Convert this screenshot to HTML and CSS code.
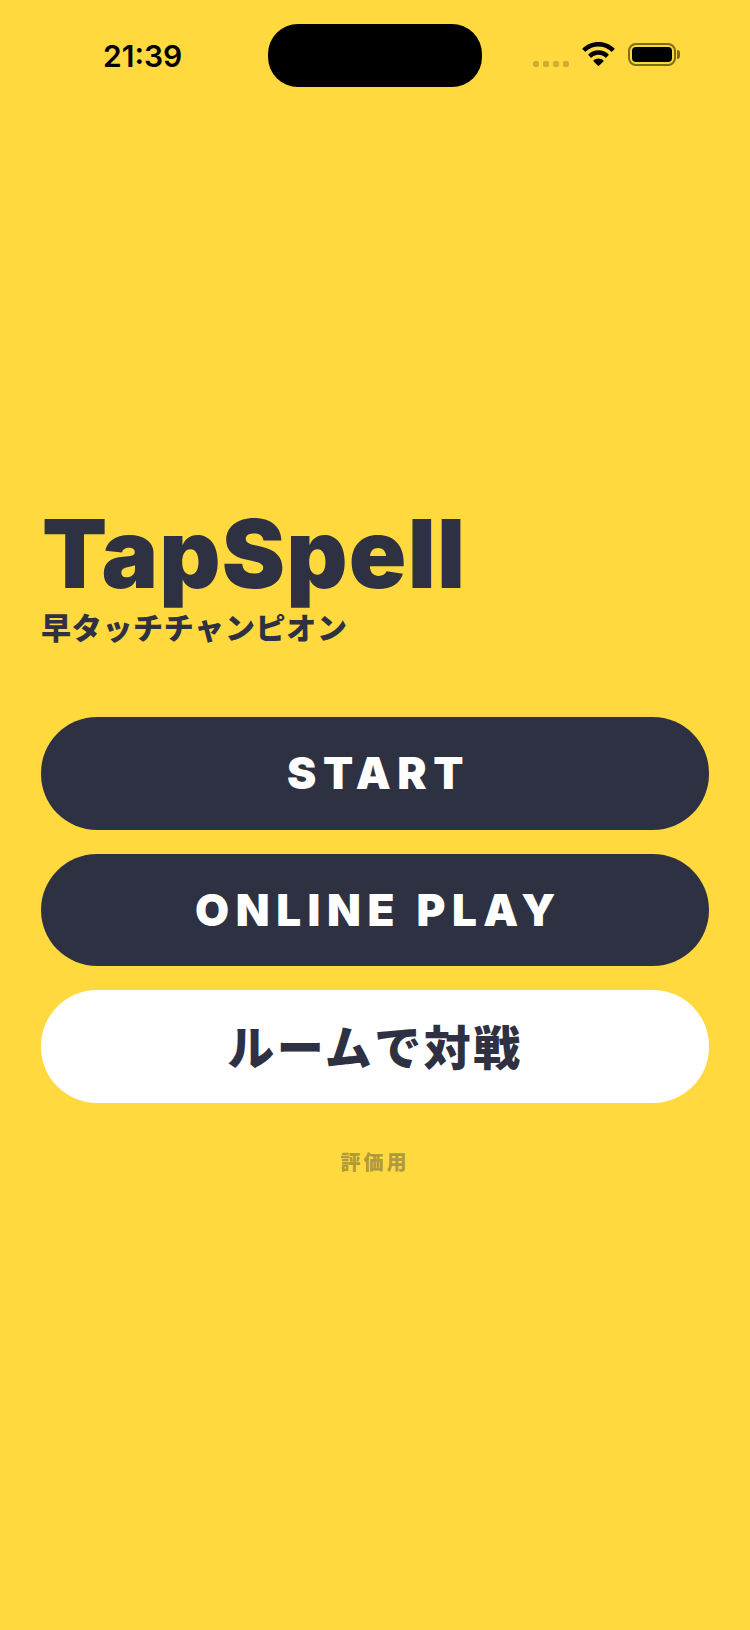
FILE: index.html
```html
<!DOCTYPE html>
<html lang="ja">
<head>
    <meta charset="UTF-8">
    <meta name="viewport" content="width=device-width, initial-scale=1.0">
    <title>TapSpell</title>
    <link rel="stylesheet" href="styles.css">
</head>
<body>

    <div class="status-bar">
        <div class="time">21:39</div>
        <div class="island"></div>
        <div class="status-icons">
            <div class="signal">
                <span></span><span></span><span></span><span></span>
            </div>
            <svg class="wifi" viewBox="0 0 33 24" width="33" height="24">
                <path d="M16.5 0C10.3 0 4.7 2.4.6 6.3c-.3.3-.3.7 0 1l2.2 2.3c.3.3.7.3 1 0C7.1 6.4 11.600 4.500 16.500 4.500s9.400 1.900 12.700 5.100c.3.3.7.3 1 0l2.200-2.300c.3-.3.3-.7 0-1C28.300 2.400 22.700 0 16.500 0z"/>
                <path d="M16.500 8.200c-3.900 0-7.400 1.500-10 4-.3.3-.3.7 0 1l2.200 2.300c.3.3.7.3 1 0 1.800-1.700 4.200-2.700 6.800-2.700s5 1 6.800 2.700c.3.3.7.3 1 0l2.200-2.300c.3-.3.3-.7 0-1-2.600-2.500-6.100-4-10-4z"/>
                <path d="M16.500 16.500c-1.900 0-3.600.7-4.900 1.900-.3.3-.3.7 0 1l4.400 4.400c.3.3.7.3 1 0l4.400-4.400c.3-.3.3-.7 0-1-1.300-1.200-3-1.900-4.900-1.900z"/>
            </svg>
            <div class="battery">
                <div class="battery-body"><div class="battery-level"></div></div>
                <div class="battery-nub"></div>
            </div>
        </div>
    </div>

    <main class="home">
        <h1 class="title">TapSpell</h1>
        <p class="subtitle">早タッチチャンピオン</p>

        <div class="buttons">
            <button class="btn btn-dark">START</button>
            <button class="btn btn-dark">ONLINE PLAY</button>
            <button class="btn btn-light">ルームで対戦</button>
        </div>

        <p class="note">評価用</p>
    </main>

</body>
</html>
```

FILE: styles.css
```css
body {
    margin: 0;
    background-color: #ffd93d;
    color: #2d3142;
    font-family: Inter, "Noto Sans CJK JP", sans-serif;
}

.status-bar {
    display: flex;
    align-items: flex-start;
    height: 87px;
    padding: 24px 69px 0 103px;
}
.time {
    width: 165px;
    margin-top: 14px;
    color: #000;
    font-size: 30px;
    font-weight: 600;
    line-height: 36px;
}
.island {
    width: 214px;
    height: 63px;
    background-color: #000;
    border-radius: 30px;
}
.status-icons {
    display: flex;
    align-items: flex-start;
    margin-left: 51px;
}
.signal {
    display: flex;
    gap: 4px;
    margin-top: 37px;
}
.signal span {
    width: 6px;
    height: 6px;
    background-color: rgba(0, 0, 0, 0.2);
    border-radius: 2px;
}
.wifi {
    margin: 18px 0 0 13px;
}
.battery {
    display: flex;
    align-items: center;
    margin: 19px 0 0 13px;
}
.battery-body {
    box-sizing: border-box;
    width: 48px;
    height: 23px;
    padding: 2px;
    border: 2px solid rgba(0, 0, 0, 0.5);
    border-radius: 8px;
}
.battery-level {
    height: 100%;
    background-color: #000;
    border-radius: 4px;
}
.battery-nub {
    width: 3px;
    height: 9px;
    margin-left: 1px;
    background-color: rgba(0, 0, 0, 0.5);
    border-radius: 0 3px 3px 0;
}

.home {
    padding: 0 41px;
}
.title {
    margin: 398px 0 0 1px;
    font-size: 95px;
    font-weight: 900;
    line-height: 90px;
    letter-spacing: 1.2px;
}
.subtitle {
    margin: 11px 0 0;
    font-size: 30px;
    font-weight: 900;
    line-height: 36px;
    letter-spacing: 0.7px;
}
.buttons {
    display: flex;
    flex-direction: column;
    gap: 24px;
    margin-top: 71px;
}
.btn {
    height: 112.5px;
    padding: 0;
    border: none;
    border-radius: 56px;
    font-family: inherit;
    font-size: 44px;
    font-weight: 900;
    letter-spacing: 6.6px;
}
.btn-dark {
    padding-left: 7px;
    background-color: #2d3142;
    color: #fff;
}
.btn-light {
    padding-bottom: 4px;
    background-color: #fff;
    color: #2d3142;
    font-size: 47px;
    letter-spacing: 2.5px;
}
.note {
    margin: 44px 0 0;
    color: rgba(45, 49, 66, 0.4);
    font-size: 20px;
    font-weight: 900;
    letter-spacing: 3px;
    text-align: center;
}
```
